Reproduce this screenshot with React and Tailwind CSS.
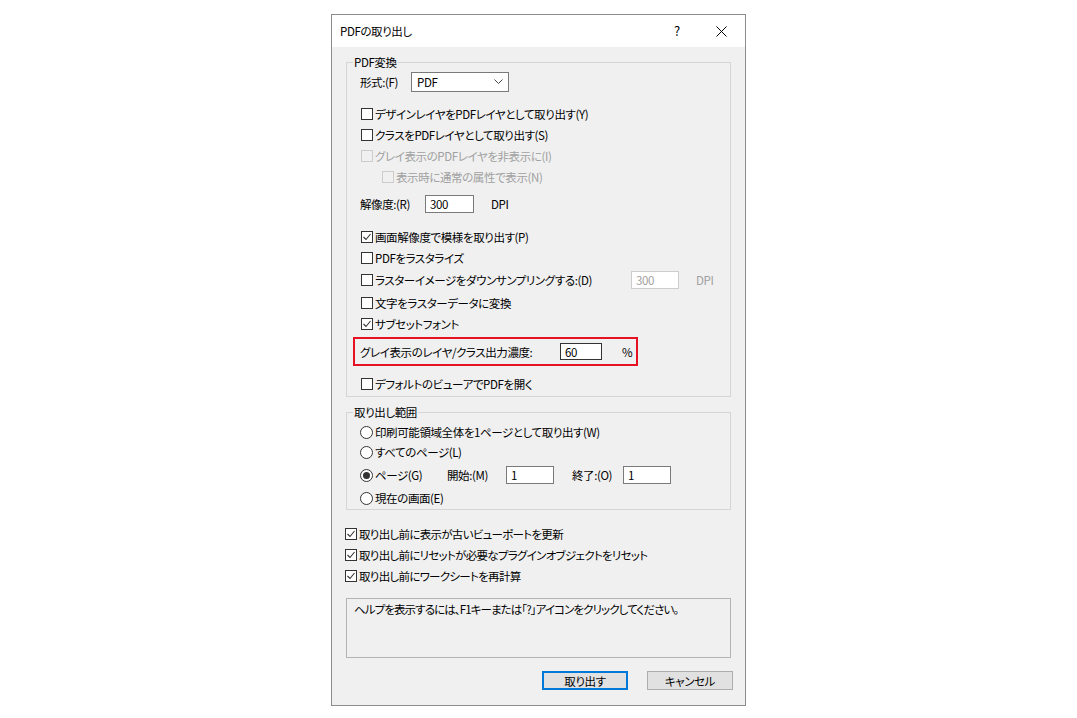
import React from "react";

const font = "font-['Noto_Sans_CJK_JP',sans-serif] [font-feature-settings:'palt']";

function CheckBox({ checked, disabled }) {
  return (
    <span
      className={`w-[12px] h-[12px] shrink-0 border flex items-center justify-center ${
        disabled ? "border-[#cccccc] bg-[#f0f0f0]" : "border-[#333333] bg-white"
      }`}
    >
      {checked && (
        <svg width="10" height="10" viewBox="0 0 10 10">
          <polyline points="1.5,5 4,7.5 8.5,2" fill="none" stroke="#333" strokeWidth="1.1" />
        </svg>
      )}
    </span>
  );
}

function Radio({ checked }) {
  return (
    <span className="w-[13px] h-[13px] shrink-0 rounded-full border border-[#333333] bg-white flex items-center justify-center">
      {checked && <span className="w-[7px] h-[7px] rounded-full bg-[#333333]" />}
    </span>
  );
}

function CheckRow({ label, checked, disabled, className = "", h = "h-[21px]" }) {
  return (
    <div className={`flex items-center ${h} ${className}`}>
      <CheckBox checked={checked} disabled={disabled} />
      <span className={`ml-[2px] ${disabled ? "text-[#a0a0a0]" : ""}`}>{label}</span>
    </div>
  );
}

function RadioRow({ label, checked }) {
  return (
    <div className="flex items-center h-[20px]">
      <Radio checked={checked} />
      <span className="ml-[2px]">{label}</span>
    </div>
  );
}

function Field({ value, w = "w-[49px]", h = "h-[18px]", disabled, dark }) {
  return (
    <div
      className={`${w} ${h} shrink-0 border flex items-center pl-[4px] bg-white ${
        disabled ? "border-[#cccccc] text-[#a0a0a0]" : dark ? "border-[#333333]" : "border-[#7a7a7a]"
      }`}
    >
      {value}
    </div>
  );
}

function Group({ title, className = "", children }) {
  return (
    <div className={`relative border border-[#d5d5d5] ${className}`}>
      <span className="absolute -top-[9px] left-[6px] px-[1px] bg-[#f0f0f0] leading-4">{title}</span>
      {children}
    </div>
  );
}

export default function App() {
  return (
    <div className={`w-full h-[718px] bg-white flex justify-center pt-[14px] text-[11.5px] tracking-[-0.4px] leading-4 text-black ${font}`}>
      <div className="w-[415px] h-[692px] border border-[#8c8c8c] bg-[#f0f0f0] flex flex-col">
        {/* title bar */}
        <div className="h-[32px] bg-white flex items-center pl-[8px] shrink-0">
          <span>PDFの取り出し</span>
          <span className="ml-auto w-[10px] text-center text-[13px]">?</span>
          <svg className="ml-[34px] mr-[18px]" width="11" height="11" viewBox="0 0 11 11">
            <path d="M0.5 0.5 L10.5 10.5 M10.5 0.5 L0.5 10.5" stroke="#000" strokeWidth="1" />
          </svg>
        </div>

        <div className="px-[14px] flex flex-col">
          {/* PDF変換 */}
          <Group title="PDF変換" className="mt-[15px] pl-[13px] pb-[2px]">
            <div className="mt-[9px] h-[20px] flex items-center">
              <span className="w-[51px]">形式:(F)</span>
              <div className="w-[98px] h-[20px] border border-[#7a7a7a] bg-white flex items-center pl-[5px]">
                <span>PDF</span>
                <svg className="ml-auto mr-[5px]" width="9" height="6" viewBox="0 0 9 6">
                  <polyline points="0.5,0.5 4.5,4.5 8.5,0.5" fill="none" stroke="#444" strokeWidth="1" />
                </svg>
              </div>
            </div>

            <div className="mt-[11px] pl-px">
              <CheckRow label="デザインレイヤをPDFレイヤとして取り出す(Y)" />
              <CheckRow label="クラスをPDFレイヤとして取り出す(S)" />
              <CheckRow label="グレイ表示のPDFレイヤを非表示に(I)" disabled />
              <CheckRow label="表示時に通常の属性で表示(N)" disabled className="ml-[21px]" />
            </div>

            <div className="mt-[8px] h-[18px] flex items-center">
              <span className="w-[65px]">解像度:(R)</span>
              <Field value="300" />
              <span className="ml-[17px]">DPI</span>
            </div>

            <div className="mt-[13px] pl-px">
              <CheckRow label="画面解像度で模様を取り出す(P)" checked />
              <CheckRow label="PDFをラスタライズ" />
              <div className="flex items-center h-[24px]">
                <div className="w-[270px] flex items-center">
                  <CheckBox />
                  <span className="ml-[2px]">ラスターイメージをダウンサンプリングする:(D)</span>
                </div>
                <Field value="300" w="w-[48px]" disabled />
                <span className="ml-[17px] text-[#a0a0a0]">DPI</span>
              </div>
              <CheckRow label="文字をラスターデータに変換" />
              <CheckRow label="サブセットフォント" checked />
            </div>

            <div className="mt-[3px] -ml-[7px] w-[285px] h-[29px] border-2 border-[#e81123] flex items-center pl-[5px]">
              <span className="w-[200px]">グレイ表示のレイヤ/クラス出力濃度:</span>
              <Field value="60" w="w-[42px]" h="h-[17px]" dark />
              <span className="ml-[20px]">%</span>
            </div>

            <CheckRow label="デフォルトのビューアでPDFを開く" className="mt-[7px] pl-px" />
          </Group>

          {/* 取り出し範囲 */}
          <Group title="取り出し範囲" className="mt-[15px] pl-[13px] pb-[1px]">
            <div className="mt-[9px]">
              <RadioRow label="印刷可能領域全体を1ページとして取り出す(W)" />
              <RadioRow label="すべてのページ(L)" />
              <div className="flex items-center h-[26px]">
                <div className="w-[87px] flex items-center">
                  <Radio checked />
                  <span className="ml-[2px]">ページ(G)</span>
                </div>
                <span className="w-[59px]">開始:(M)</span>
                <Field value="1" w="w-[48px]" />
                <span className="ml-[18px] w-[51px]">終了:(O)</span>
                <Field value="1" w="w-[48px]" />
              </div>
              <RadioRow label="現在の画面(E)" />
            </div>
          </Group>

          {/* 事前処理 */}
          <div className="mt-[13px] -ml-px tracking-[-0.7px]">
            <CheckRow label="取り出し前に表示が古いビューポートを更新" checked />
            <CheckRow label="取り出し前にリセットが必要なプラグインオブジェクトをリセット" checked />
            <CheckRow label="取り出し前にワークシートを再計算" checked />
          </div>

          <div className="mt-[12px] h-[60px] border border-[#b4b4b4] pl-[7px] pt-[2px] tracking-[-0.9px]">
            ヘルプを表示するには、F1キーまたは「?」アイコンをクリックしてください。
          </div>

          <div className="mt-[13px] -mr-[2px] flex justify-end gap-[19px]">
            <button className="w-[86px] h-[19px] border-2 border-[#0078d7] bg-[#e1e1e1] flex items-center justify-center">
              取り出す
            </button>
            <button className="w-[86px] h-[19px] border border-[#adadad] bg-[#e1e1e1] flex items-center justify-center">
              キャンセル
            </button>
          </div>
        </div>
      </div>
    </div>
  );
}
